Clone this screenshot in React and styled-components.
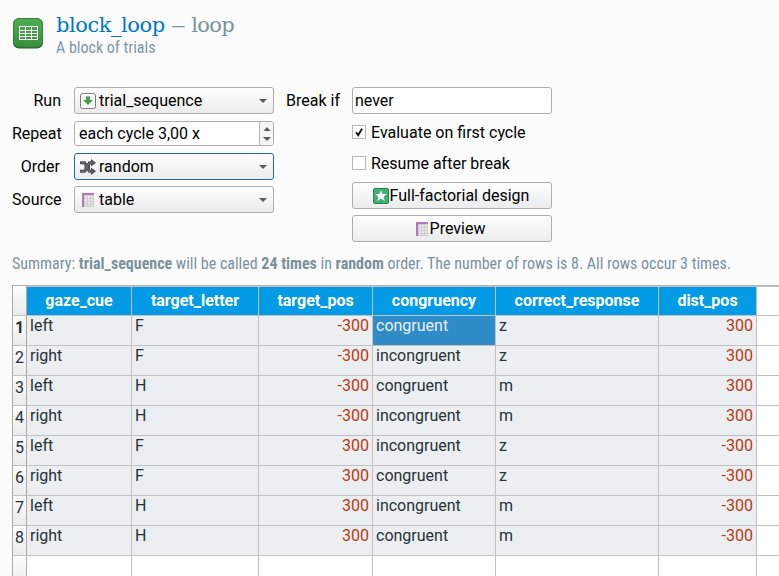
import React from "react";
import styled, { createGlobalStyle, css } from "styled-components";

const GlobalStyle = createGlobalStyle`
  * { box-sizing: border-box; }
  body { margin: 0; background: #fcfcfc; overflow: hidden; }
`;

const Page = styled.main`
  width: 779px;
  height: 576px;
  overflow: hidden;
  padding: 12px 0 0 12px;
  background: #fcfcfc;
  color: #000;
  font: 16px/20px Roboto, sans-serif;
`;

const Header = styled.header`
  display: flex;
  height: 75px;
  gap: 12px;
  & > svg { margin-top: 5px; flex: none; }
`;

const Title = styled.h1`
  margin: 0;
  font: 400 21px/26px "Roboto Slab", "DejaVu Serif", serif;
  letter-spacing: -0.45px;
  color: #7a929e;
  white-space: nowrap;
`;

const ItemName = styled.span`
  color: #0078c8;
`;

const Dash = styled.span`
  display: inline-block;
  margin: 0 2px;
  transform: scaleX(1.4);
`;

const ItemType = styled.span`
  letter-spacing: -0.7px;
`;

const Subtitle = styled.p`
  margin: 0;
  font: 400 16px/19px "Roboto Condensed", Roboto, sans-serif;
  font-stretch: 75%;
  color: #7f96a1;
`;

const Controls = styled.section`
  display: flex;
  height: 155px;
`;

const Form = styled.div`
  display: grid;
  grid-template-columns: 49px 200px;
  grid-auto-rows: 27px;
  column-gap: 13px;
  row-gap: 6px;
  align-items: center;
`;

const Label = styled.label`
  text-align: right;
  white-space: nowrap;
  padding-right: ${(p) => p.$inset || 0}px;
`;

const frame = css`
  border: 1px solid #adadad;
  border-radius: 3px;
  background: linear-gradient(#fdfdfd, #ececec);
`;

const Combo = styled.div`
  ${frame}
  border-color: ${(p) => (p.$focused ? "#1f6fa5" : "#adadad")};
  display: flex;
  align-items: center;
  height: 27px;
  padding: 0 6px 0 5px;
  & > span { flex: 1; margin-left: 3px; }
`;

const Spin = styled.div`
  ${frame}
  display: flex;
  height: 25px;
  background: #fff;
  overflow: hidden;
  line-height: 23px;
  & > span { flex: 1; padding-left: 4px; }
`;

const SpinButtons = styled.div`
  width: 14px;
  border-left: 1px solid #b4b4b4;
  background: #f6f6f6;
  display: flex;
  flex-direction: column;
  align-items: center;
  justify-content: center;
  gap: 6px;
`;

const BreakLabel = styled(Label)`
  width: 54px;
  height: 27px;
  line-height: 27px;
  margin: 0 12px 0 12px;
`;

const Options = styled.div`
  display: flex;
  flex-direction: column;
  width: 200px;
`;

const Input = styled.div`
  ${frame}
  height: 27px;
  line-height: 25px;
  padding-left: 2px;
  background: #fff;
`;

const CheckRow = styled.label`
  display: flex;
  align-items: center;
  height: 20px;
  gap: 5px;
  margin-top: ${(p) => p.$top}px;
  white-space: nowrap;
`;

const CheckText = styled.span`
  padding-top: 1px;
  line-height: 19px;
`;

const CheckBox = styled.span`
  width: 14px;
  height: 14px;
  border: 1px solid #b9b9b9;
  background: #fff;
  display: flex;
`;

const Button = styled.button`
  ${frame}
  display: flex;
  align-items: center;
  justify-content: center;
  height: 27px;
  padding: 0 ${(p) => p.$shift || 0}px 0 0;
  margin-top: ${(p) => p.$top}px;
  font: inherit;
  color: #000;
  gap: 1px;
`;

const Summary = styled.p`
  margin: 12px 0 11px;
  height: 20px;
  font: 400 16px/20px "Roboto Condensed", Roboto, sans-serif;
  font-stretch: 75%;
  letter-spacing: -0.01px;
  color: #7a919d;
  white-space: nowrap;
`;

const Grid = styled.div`
  display: grid;
  grid-template-columns: 14px 105px 127px 114px 123px 163px 98px 23px;
  grid-auto-rows: 30px;
  border-left: 1px solid #aaa;
  border-top: 1px solid #b4b4b4;
  background: #fff;
`;

const Cell = styled.div`
  border-right: 1px solid #bfc1c2;
  border-bottom: 1px solid #bfc1c2;
  padding: 0 3px;
  line-height: 20px;
  white-space: nowrap;
  text-align: ${(p) => (p.$number ? "right" : "left")};
  color: ${(p) => (p.$selected ? "#eceff1" : p.$number ? "#bf360c" : "#263238")};
  background: ${(p) => (p.$selected ? "#308cc6" : p.$empty ? "#fff" : "#eceff1")};
`;

const HeadCell = styled(Cell)`
  color: #fff;
  border-top: 1px solid #c4c4c4;
  background: ${(p) => (p.$empty ? "#fff" : "#039be5")};
  font-weight: 700;
  line-height: 28px;
  text-align: center;
`;

const RowHead = styled.div`
  border-right: 1px solid #aaa;
  border-bottom: 1px solid #bfc1c2;
  background: linear-gradient(#fdfdfd, #ebebeb);
  color: #263238;
  text-align: center;
  line-height: 24px;
  font-weight: ${(p) => (p.$bold ? 700 : 400)};
`;

const LoopIcon = () => (
  <svg width="32" height="32" viewBox="0 0 32 32">
    <defs>
      <linearGradient id="green" x2="0" y2="1">
        <stop stopColor="#4caf50" />
        <stop offset="1" stopColor="#388e3c" />
      </linearGradient>
    </defs>
    <rect x="1" y="1.5" width="30" height="30" rx="6" fill="#245c29" />
    <rect x="1.5" y="1.5" width="29" height="28.5" rx="5.5" fill="url(#green)" stroke="#3d7c41" />
    <path fill="#fff" fillRule="evenodd" d="M7 9H26V23H7ZM8 10V13H13V10ZM14 10V13H19V10ZM20 10V13H25V10ZM8 14V16H13V14ZM14 14V16H19V14ZM20 14V16H25V14ZM8 17V19H13V17ZM14 17V19H19V17ZM20 17V19H25V17ZM8 20V22H13V20ZM14 20V22H19V20ZM20 20V22H25V20Z" />
  </svg>
);

const SequenceIcon = () => (
  <svg width="16" height="16" viewBox="0 0 16 16">
    <rect x=".5" y=".5" width="15" height="15" rx="2" fill="#fafafa" stroke="#777b7d" />
    <path d="M6 3.5H10V7H13L8 12 3 7H6Z" fill="#43a047" />
  </svg>
);

const ShuffleIcon = () => (
  <svg width="16" height="16" viewBox="0 0 16 16">
    <path d="M0 3.7H4.5L6 5.5V10.5L4.5 12.3H0M12 3.7H9.5L8.5 5.5V10.5L9.5 12.3H12" fill="none" stroke="#4b4e50" strokeWidth="3" />
    <path d="M4 4 10 12M10 4 4 12" stroke="#4b4e50" strokeWidth="2" />
    <path d="M11 0 16 3.8 11 7.5ZM11 8.5 16 12.2 11 16Z" fill="#4b4e50" />
    <path d="M1 3.7H4.5L9.5 12.3H13M1 12.3H4.5L9.5 3.7H13" fill="none" stroke="#777b7d" strokeWidth="0.9" />
  </svg>
);

const TableIcon = () => (
  <svg width="14" height="16" viewBox="1 0 14 16">
    <path d="M2 1H14V15H2Z" fill="#cecece" />
    <path d="M5 4H7V6H5ZM8 4H10V6H8ZM11 4H13V6H11ZM5 7H7V9H5ZM8 7H10V9H8ZM11 7H13V9H11ZM5 10H7V12H5ZM8 10H10V12H8ZM11 10H13V12H11ZM5 13H7V14H5ZM8 13H10V14H8ZM11 13H13V14H11Z" fill="#e8e8e8" />
    <path d="M2 1H14V3H4V15H2Z" fill="#b477bd" />
  </svg>
);

const StarIcon = () => (
  <svg width="16" height="16" viewBox="0 0 16 16">
    <rect x=".5" y=".5" width="15" height="15" rx="1.5" fill="#3cb371" stroke="#2c7f50" />
    <path d="M8 2.2 9.7 6H13.8L10.5 8.7 11.8 13 8 10.4 4.2 13 5.5 8.7 2.2 6H6.3Z" fill="#fff" />
  </svg>
);

const SourceIcon = styled(TableIcon)``;

const IconSlot = styled.i`
  display: flex;
  justify-content: center;
  width: 16px;
  flex: none;
`;

const Caret = ({ up }) => (
  <svg width="8" height="4" viewBox="0 0 8 4">
    <path d={up ? "M0.5 4 4 0 7.5 4Z" : "M0 0H8L4 4Z"} fill="#5a5a5a" />
  </svg>
);

const Check = () => (
  <svg width="12" height="12" viewBox="0 0 12 12">
    <path d="M3 6.2 5.2 9.3 9 2.6" fill="none" stroke="#111" strokeWidth="1.9" />
  </svg>
);

const columns = ["gaze_cue", "target_letter", "target_pos", "congruency", "correct_response", "dist_pos"];
const rows = [
  ["left", "F", "-300", "congruent", "z", "300"],
  ["right", "F", "-300", "incongruent", "z", "300"],
  ["left", "H", "-300", "congruent", "m", "300"],
  ["right", "H", "-300", "incongruent", "m", "300"],
  ["left", "F", "300", "incongruent", "z", "-300"],
  ["right", "F", "300", "congruent", "z", "-300"],
  ["left", "H", "300", "incongruent", "m", "-300"],
  ["right", "H", "300", "congruent", "m", "-300"],
];

export default function App() {
  return (
    <Page>
      <GlobalStyle />
      <Header>
        <LoopIcon />
        <div>
          <Title><ItemName>block_loop</ItemName> <Dash>–</Dash> <ItemType>loop</ItemType></Title>
          <Subtitle>A block of trials</Subtitle>
        </div>
      </Header>
      <Controls>
        <Form>
          <Label>Run</Label>
          <Combo><SequenceIcon /><span>trial_sequence</span><Caret /></Combo>
          <Label>Repeat</Label>
          <Spin>
            <span>each cycle 3,00 x</span>
            <SpinButtons><Caret up /><Caret /></SpinButtons>
          </Spin>
          <Label $inset={1}>Order</Label>
          <Combo $focused><ShuffleIcon /><span>random</span><Caret /></Combo>
          <Label>Source</Label>
          <Combo><IconSlot><SourceIcon /></IconSlot><span>table</span><Caret /></Combo>
        </Form>
        <BreakLabel>Break if</BreakLabel>
        <Options>
          <Input>never</Input>
          <CheckRow $top={8}><CheckBox><Check /></CheckBox><CheckText>Evaluate on first cycle</CheckText></CheckRow>
          <CheckRow $top={11}><CheckBox /><CheckText>Resume after break</CheckText></CheckRow>
          <Button $top={9} $shift={2}><StarIcon />Full-factorial design</Button>
          <Button $top={6} $shift={4}><TableIcon />Preview</Button>
        </Options>
      </Controls>
      <Summary>
        Summary: <b>trial_sequence</b> will be called <b>24 times</b> in <b>random</b> order. The number of rows is 8. All rows occur 3 times.
      </Summary>
      <Grid>
        <RowHead />
        {columns.map((name) => <HeadCell key={name}>{name}</HeadCell>)}
        <HeadCell $empty />
        {rows.map((row, r) => (
          <React.Fragment key={r}>
            <RowHead $bold={r === 0}>{r + 1}</RowHead>
            {row.map((value, c) => (
              <Cell key={c} $number={c === 2 || c === 5} $selected={r === 0 && c === 3}>{value}</Cell>
            ))}
            <Cell $empty />
          </React.Fragment>
        ))}
        <RowHead />
        {[...columns, ""].map((name) => <Cell key={name} $empty />)}
      </Grid>
    </Page>
  );
}
